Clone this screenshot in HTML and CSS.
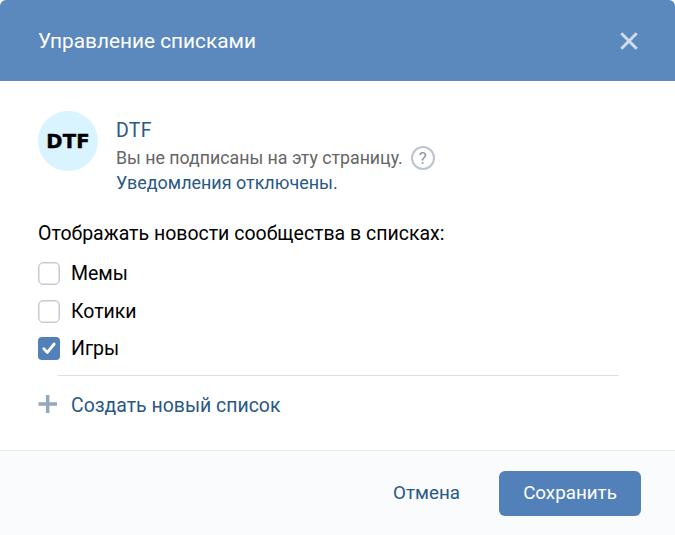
FILE: index.html
```html
<!DOCTYPE html>
<html lang="ru">
<head>
<meta charset="utf-8">
<title>Управление списками</title>
<link rel="stylesheet" href="styles.css">
</head>
<body>
<div class="dialog">
  <header class="header">
    <h1 class="title">Управление списками</h1>
    <button class="close" aria-label="Закрыть">
      <svg width="18" height="18" viewBox="0 0 18 18"><path d="M1.3 1.3 16.7 16.7M16.7 1.3 1.3 16.7"/></svg>
    </button>
  </header>
  <main class="content">
    <section class="profile">
      <div class="avatar"><span class="avatar-text">DTF</span></div>
      <div class="info">
        <a class="name">DTF</a>
        <div class="status"><span class="status-text">Вы не подписаны на эту страницу.</span><span class="help">?</span></div>
        <a class="notify">Уведомления отключены.</a>
      </div>
    </section>
    <h2 class="caption">Отображать новости сообщества в списках:</h2>
    <ul class="lists">
      <li class="item"><span class="box"></span><span class="memes">Мемы</span></li>
      <li class="item"><span class="box"></span><span class="cats">Котики</span></li>
      <li class="item"><span class="box checked"><svg width="22" height="23" viewBox="0 0 22 23"><path d="M5.8 11.8 9.4 15.4 16.2 7"/></svg></span><span class="games">Игры</span></li>
    </ul>
    <div class="divider"></div>
    <a class="create">
      <svg width="19" height="18" viewBox="0 0 19 18"><path d="M0.5 9H19M9.7 0V18"/></svg>
      <span class="create-text">Создать новый список</span>
    </a>
  </main>
  <footer class="footer">
    <button class="cancel">Отмена</button>
    <button class="save">Сохранить</button>
  </footer>
</div>
</body>
</html>
```
FILE: styles.css
```css
* { box-sizing: border-box; }
body {
  margin: 0;
  background: #fff;
  font-family: Roboto, "Liberation Sans", sans-serif;
  font-size: 19.5px;
  color: #000;
}
button {
  border: 0;
  padding: 0;
  background: none;
  font: inherit;
}
.dialog {
  display: flex;
  flex-direction: column;
  width: 675px;
  height: 535px;
  border-radius: 6px 6px 0 0;
  overflow: hidden;
}
.header {
  display: flex;
  align-items: center;
  justify-content: space-between;
  height: 81px;
  padding: 0 37px 0 38px;
  background: #5b88bd;
}
.title {
  margin: 0;
  font-size: 20.8px;
  font-weight: 400;
  color: #fff;
}
.close { height: 18px; }
.close svg {
  display: block;
  fill: none;
  stroke: #cfdeed;
  stroke-width: 3;
}
.content {
  flex: 1;
  padding: 30px 38px 0;
}
.profile {
  display: flex;
  gap: 18px;
}
.avatar {
  display: flex;
  align-items: center;
  justify-content: center;
  width: 60px;
  height: 60px;
  border-radius: 50%;
  background: #d9f4ff;
}
.avatar-text {
  font: 700 19px/24px "DejaVu Sans", sans-serif;
  letter-spacing: 0.2px;
  transform: scaleX(1.03);
  -webkit-text-stroke: 0.4px #000;
}
.info {
  display: flex;
  flex-direction: column;
  padding-top: 7px;
  font-size: 17.95px;
}
.name {
  font-size: 19.5px;
  line-height: 26px;
  letter-spacing: 0.3px;
  color: #2a5885;
}
.status {
  display: flex;
  align-items: center;
  gap: 8px;
  height: 27px;
  font-size: 17.75px;
  color: #656565;
}
.help {
  width: 24px;
  height: 24px;
  border: 2px solid #bcc4ce;
  border-radius: 50%;
  font-size: 17px;
  line-height: 21px;
  text-align: center;
  color: #8d96a2;
}
.notify {
  line-height: 24px;
  color: #2a5885;
}
.caption {
  margin: 25px 0 0;
  font-size: 19.5px;
  font-weight: 400;
  line-height: 28px;
}
.lists {
  margin: 7px 0 0;
  padding: 0;
  list-style: none;
}
.item {
  display: flex;
  align-items: center;
  gap: 11px;
  height: 37.5px;
}
.box {
  width: 22px;
  height: 23px;
  border: 1.5px solid #c5cbd3;
  box-shadow: inset 0 0 0 0.5px #c5cbd3;
  border-radius: 5px;
}
.checked {
  border: 0;
  box-shadow: none;
  border-radius: 4px;
  background: #5181b8;
}
.checked svg {
  display: block;
  fill: none;
  stroke: #fff;
  stroke-width: 2.8;
  stroke-linecap: round;
  stroke-linejoin: round;
}
.divider {
  height: 1px;
  margin: 7px 18px 0 20px;
  background: #dae1e8;
}
.create {
  display: flex;
  align-items: center;
  gap: 14px;
  height: 59px;
  font-size: 19.45px;
  color: #2a5885;
}
.create svg {
  margin-bottom: 3px;
  fill: none;
  stroke: #92a8be;
  stroke-width: 3.4;
}
.footer {
  display: flex;
  align-items: center;
  justify-content: flex-end;
  gap: 39px;
  height: 85px;
  padding: 1px 34px 0 0;
  border-top: 1px solid #e4e7eb;
  background: #fafbfc;
  font-size: 18.8px;
}
.cancel {
  padding-bottom: 2px;
  color: #2a5885;
}
.save {
  width: 142px;
  height: 45px;
  padding-bottom: 2px;
  border-radius: 6px;
  background: #5181b8;
  color: #fff;
}
```
